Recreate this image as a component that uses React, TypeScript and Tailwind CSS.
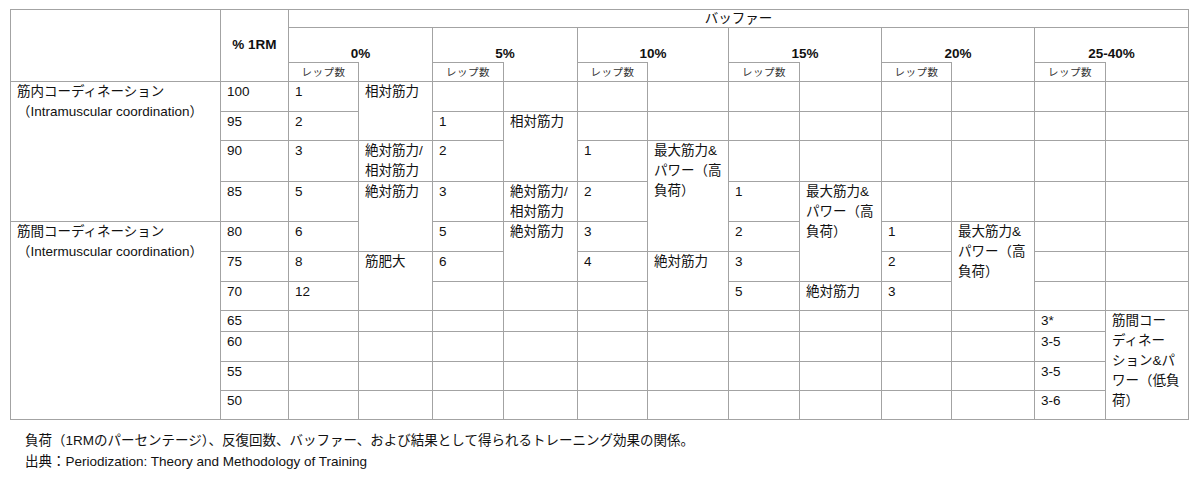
import React from 'react';

type Cell = { t?: string; s?: number };

const spanCls: Record<number, string> = {
  1: '',
  2: 'row-span-2',
  3: 'row-span-3',
  4: 'row-span-4',
  7: 'row-span-7',
};

const MAX = '最大筋力&パワー（高負荷）';
const ABS = '絶対筋力';
const REL = '相対筋力';
const MIX = '絶対筋力/相対筋力';

// n empty cells
const blank = (n: number): Cell[] => Array.from({ length: n }, () => ({}));
const c = (t: string, s = 1): Cell => ({ t, s });

// body rows in row-major order; cells under a rowspan are skipped (grid auto-placement fills the gaps)
const body: Cell[][] = [
  [c('筋内コーディネーション\n（Intramuscular coordination）', 4), c('100'), c('1'), c(REL, 2), ...blank(10)],
  [c('95'), c('2'), c('1'), c(REL, 2), ...blank(8)],
  [c('90'), c('3'), c(MIX), c('2'), c('1'), c(MAX, 3), ...blank(6)],
  [c('85'), c('5'), c(ABS, 2), c('3'), c(MIX), c('2'), c('1'), c(MAX, 3), ...blank(4)],
  [c('筋間コーディネーション\n（Intermuscular coordination）', 7), c('80'), c('6'), c('5'), c(ABS, 2), c('3'), c('2'), c('1'), c(MAX, 3), ...blank(2)],
  [c('75'), c('8'), c('筋肥大', 2), c('6'), c('4'), c(ABS, 2), c('3'), c('2'), ...blank(2)],
  [c('70'), c('12'), ...blank(3), c('5'), c(ABS), c('3'), ...blank(2)],
  [c('65'), ...blank(10), c('3*'), c('筋間コーディネーション&パワー（低負荷）', 4)],
  [c('60'), ...blank(10), c('3-5')],
  [c('55'), ...blank(10), c('3-5')],
  [c('50'), ...blank(10), c('3-6')],
];

const groups = [
  { label: '0%', head: 'col-start-3', rep: 'col-start-3' },
  { label: '5%', head: 'col-start-5', rep: 'col-start-5' },
  { label: '10%', head: 'col-start-7', rep: 'col-start-7' },
  { label: '15%', head: 'col-start-9', rep: 'col-start-9' },
  { label: '20%', head: 'col-start-11', rep: 'col-start-11' },
  { label: '25-40%', head: 'col-start-13', rep: 'col-start-13' },
];

const line = 'border-r border-b border-[#a3a3a3]';
const cellText = 'pl-[6px] pr-[4px] text-[13.5px] leading-[20px] whitespace-pre-line [line-break:strict]';

const App: React.FC = () => {
  return (
    <div
      lang="ja"
      className="min-h-screen bg-white pt-[9px] text-[#111] font-['Liberation_Sans','Noto_Sans_CJK_JP',sans-serif]"
    >
      <div className="ml-[10px] w-[1179px] grid grid-cols-[210px_68px_70px_74px_71px_74px_70px_81px_71px_82px_70px_83px_71px_83px] grid-rows-[18px_34px_20px_30px_29px_41px_40px_30px_30px_29px_21px_30px_29px_29px] border-l border-t border-[#a3a3a3]">
        {/* header */}
        <div className={`col-start-1 row-start-1 row-span-3 ${line}`} />
        <div className={`col-start-2 row-start-1 row-span-3 flex items-center justify-center text-[13.5px] font-bold ${line}`}>
          % 1RM
        </div>
        <div className={`col-start-3 col-span-12 row-start-1 flex items-center justify-center text-[13.5px] leading-[20px] ${line}`}>
          バッファー
        </div>
        {groups.map((g) => (
          <div
            key={g.label}
            className={`${g.head} col-span-2 row-start-2 row-span-2 flex items-center justify-center text-[13.5px] font-bold ${line}`}
          >
            {g.label}
          </div>
        ))}
        {groups.map((g) => (
          <div
            key={g.label + '-rep'}
            className={`${g.rep} row-start-3 flex items-center justify-center border-t border-r border-[#a3a3a3] text-[10.5px] text-[#333] tracking-[0.5px]`}
          >
            レップ数
          </div>
        ))}

        {/* body */}
        {body.map((row, i) =>
          row.map((cell, j) => (
            <div key={`${i}-${j}`} className={`${spanCls[cell.s ?? 1]} ${line} ${cellText}`}>
              {cell.t}
            </div>
          ))
        )}
      </div>

      <div className="mt-[10px] pl-[25px] text-[13.5px] leading-[21px]">
        <p>負荷（1RMのパーセンテージ）、反復回数、バッファー、および結果として得られるトレーニング効果の関係。</p>
        <p>出典：Periodization: Theory and Methodology of Training</p>
      </div>
    </div>
  );
};

export default App;
